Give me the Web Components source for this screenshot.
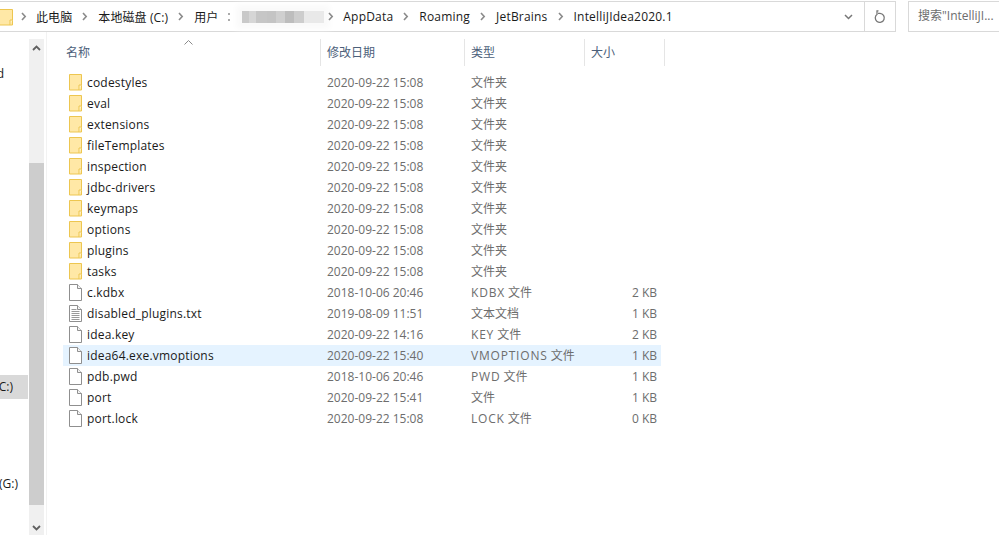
<!DOCTYPE html>
<html>
<head>
<meta charset="utf-8">
<title>IntelliJIdea2020.1</title>
<style>
  html, body { margin: 0; height: 100%; background: #fff; overflow: hidden; }
  body { font: 12px "Open Sans", "Noto Sans CJK SC", sans-serif; }
</style>
</head>
<body>
<explorer-window></explorer-window>

<template id="folder-icon">
  <svg width="13" height="17" viewBox="0 0 13 17"><path d="M.5.5h12v15.5H.5z" fill="#ffe8a6" stroke="#edc650"/><path d="M10 16v-5h2.5" fill="#fff3cf" stroke="#edc650"/></svg>
</template>
<template id="file-icon">
  <svg width="13" height="17" viewBox="0 0 13 17"><path d="M.5.5h8l4 4v12H.5z" fill="#fff" stroke="#8f8f8f"/><path d="M8.5.5v4h4" fill="#f3f3f3" stroke="#8f8f8f"/></svg>
</template>
<template id="text-icon">
  <svg width="13" height="17" viewBox="0 0 13 17"><path d="M.5.5h8l4 4v12H.5z" fill="#fff" stroke="#8f8f8f"/><path d="M8.5.5v4h4" fill="#f3f3f3" stroke="#8f8f8f"/><path d="M2.5 4.5h5M2.5 6.5h8M2.5 8.5h8M2.5 10.5h8M2.5 12.5h8M2.5 14.5h8" stroke="#9a9a9a"/></svg>
</template>

<script>
/* BARRA DE ENDERECO */
class AddressBar extends HTMLElement {
  constructor() {
    super();
    this.attachShadow({ mode: "open" });
    const chevron = `<svg class="sep" width="6" height="9" viewBox="0 0 6 9"><path d="M1 1l3.2 3.5L1 8" fill="none" stroke="#8a8a8a" stroke-width="1.6"/></svg>`;
    const crumbs = ["此电脑", "本地磁盘 (C:)", "用户"];
    const crumbs2 = ["AppData", "Roaming", "JetBrains", "IntelliJIdea2020.1"];
    this.shadowRoot.innerHTML = `
      <style>
        :host { display: flex; height: 32px; box-sizing: border-box; padding-top: 1px; color: #1a1a1a; }
        .bar { flex: 0 0 896px; box-sizing: border-box; height: 31px; border: 1px solid #d9d9d9; border-left: 0; display: flex; align-items: center; }
        .folder { flex: none; display: block; margin-top: 2px; }
        .sep { flex: none; margin: 0 10px; }
        .folder + .sep { margin: 0 9px 0 8px; }
        .crumb { white-space: nowrap; letter-spacing: .2px; }
        .crumb.cjk { letter-spacing: .1px; }
        .dots { width: 2px; height: 8px; flex: none; margin: 0 12px 0 10px; border-top: 2px solid #aaa; border-bottom: 2px solid #aaa; box-sizing: border-box; }
        .blur { width: 82px; height: 12px; flex: none; background: linear-gradient(90deg, #c9c9c9 0 8%, #d6d6d6 8% 17%, #c6c6c6 17% 30%, #c4c4c4 30% 42%, #cfcfcf 42% 52%, #bdbdbd 52% 64%, #cdcdcd 64% 76%, #e9e9e9 76% 100%); box-shadow: 0 0 6px 6px #fafafa; }
        .blur + .sep { margin: 0 9px 0 4px; }
        .spacer { flex: 1; }
        .drop { width: 31px; display: flex; justify-content: center; flex: none; }
        .refresh { width: 31px; height: 100%; border-left: 1px solid #d9d9d9; display: flex; justify-content: center; align-items: center; flex: none; box-sizing: border-box; }
        .search { margin-left: 12px; flex: 1; box-sizing: border-box; height: 31px; border: 1px solid #d9d9d9; border-right: 0; color: #6d6d6d; padding-left: 9px; line-height: 27px; white-space: nowrap; overflow: hidden; }
      </style>
      <div class="bar">
        <svg class="folder" width="13" height="17" viewBox="0 0 13 17"><path d="M-1 .5h13.5v15.5H-1z" fill="#ffe8a6" stroke="#edc650"/><path d="M10 16v-5h2.5" fill="#fff3cf" stroke="#edc650"/></svg>${chevron}
        ${crumbs.map(c => `<span class="crumb cjk">${c}</span>${c === "用户" ? "" : chevron}`).join("")}
        <span class="dots"></span><span class="blur"></span>${chevron}
        ${crumbs2.map((c, i) => `<span class="crumb">${c}</span>${i < 3 ? chevron : ""}`).join("")}
        <span class="spacer"></span>
        <span class="drop"><svg width="9" height="6" viewBox="0 0 9 6"><path d="M1 1l3.5 3.5L8 1" fill="none" stroke="#777" stroke-width="1.5"/></svg></span>
        <span class="refresh"><svg width="12" height="14" viewBox="0 0 12 14"><path d="M3.2 4.2A4.5 4.5 0 1 0 6 3.4H4M4.5 .8L3 .8V5" fill="none" stroke="#777" stroke-width="1.3"/></svg></span>
      </div>
      <div class="search">搜索"IntelliJI...</div>`;
  }
}
customElements.define("address-bar", AddressBar);

/* PAINEL DE NAVEGACAO */
class NavPane extends HTMLElement {
  constructor() {
    super();
    this.attachShadow({ mode: "open" });
    this.shadowRoot.innerHTML = `
      <style>
        :host { display: block; position: relative; flex: 0 0 29px; overflow: hidden; color: #1a1a1a; }
        /* so sobra a ponta direita do texto, o resto fica cortado */
        span { position: absolute; white-space: nowrap; line-height: 21px; }
        .sel { position: absolute; left: 0; right: 1px; top: 343px; height: 24px; background: #d9d9d9; }
      </style>
      <div class="sel"></div>
      <span style="top:31px;right:25px">d</span>
      <span style="top:344px;right:16px">C:)</span>
      <span style="top:441px;right:11px">(G:)</span>`;
  }
}
customElements.define("nav-pane", NavPane);

/* BARRA DE ROLAGEM */
class ScrollTrack extends HTMLElement {
  constructor() {
    super();
    this.attachShadow({ mode: "open" });
    this.shadowRoot.innerHTML = `
      <style>
        :host { display: flex; flex-direction: column; flex: 0 0 15px; margin-top: 7px; background: #f0f0f0; }
        .btn { height: 17px; display: flex; align-items: center; justify-content: center; flex: none; }
        .gap { height: 107px; flex: none; }
        .thumb { height: 342px; flex: none; background: #cdcdcd; }
        .rest { flex: 1; display: flex; align-items: flex-end; justify-content: center; padding-bottom: 4px; }
      </style>
      <div class="btn"><svg width="9" height="6" viewBox="0 0 9 6"><path d="M1 5l3.5-3.5L8 5" fill="none" stroke="#606060" stroke-width="1.8"/></svg></div>
      <div class="gap"></div>
      <div class="thumb"></div>
      <div class="rest"><svg width="9" height="6" viewBox="0 0 9 6"><path d="M1 1l3.5 3.5L8 1" fill="none" stroke="#606060" stroke-width="1.8"/></svg></div>`;
  }
}
customElements.define("scroll-track", ScrollTrack);

/* LINHA DE ARQUIVO */
class FileRow extends HTMLElement {
  constructor() {
    super();
    this.attachShadow({ mode: "open" });
  }
  connectedCallback() {
    const icon = document.getElementById((this.getAttribute("icon") || "file") + "-icon");
    const tipo = this.getAttribute("type").replace(/[A-Z]+/, m => `<span class="latin">${m}</span>`);
    this.shadowRoot.innerHTML = `
      <style>
        :host { display: grid; grid-template-columns: 264px 144px 114px 72px; width: 598px; height: 21px; line-height: 21px; white-space: nowrap; color: #6d6d6d; }
        :host([selected]) { background: #e5f3ff; }
        .name { display: flex; align-items: center; padding-left: 6px; color: #1a1a1a; letter-spacing: .2px; }
        .ico { width: 18px; height: 17px; flex: none; display: flex; }
        .latin { letter-spacing: .8px; }
        .size { text-align: right; }
      </style>
      <div class="name"><span class="ico"></span>${this.getAttribute("name")}</div>
      <div class="date">${this.getAttribute("date")}</div>
      <div class="type">${tipo}</div>
      <div class="size">${this.getAttribute("size") || ""}</div>`;
    this.shadowRoot.querySelector(".ico").appendChild(icon.content.cloneNode(true));
  }
}
customElements.define("file-row", FileRow);

/* LISTA DE ARQUIVOS */
const arquivos = [
  {name:"codestyles",date:"2020-09-22 15:08",type:"文件夹",icon:"folder"},
  {name:"eval",date:"2020-09-22 15:08",type:"文件夹",icon:"folder"},
  {name:"extensions",date:"2020-09-22 15:08",type:"文件夹",icon:"folder"},
  {name:"fileTemplates",date:"2020-09-22 15:08",type:"文件夹",icon:"folder"},
  {name:"inspection",date:"2020-09-22 15:08",type:"文件夹",icon:"folder"},
  {name:"jdbc-drivers",date:"2020-09-22 15:08",type:"文件夹",icon:"folder"},
  {name:"keymaps",date:"2020-09-22 15:08",type:"文件夹",icon:"folder"},
  {name:"options",date:"2020-09-22 15:08",type:"文件夹",icon:"folder"},
  {name:"plugins",date:"2020-09-22 15:08",type:"文件夹",icon:"folder"},
  {name:"tasks",date:"2020-09-22 15:08",type:"文件夹",icon:"folder"},
  {name:"c.kdbx",date:"2018-10-06 20:46",type:"KDBX 文件",size:"2 KB"},
  {name:"disabled_plugins.txt",date:"2019-08-09 11:51",type:"文本文档",size:"1 KB",icon:"text"},
  {name:"idea.key",date:"2020-09-22 14:16",type:"KEY 文件",size:"2 KB"},
  {name:"idea64.exe.vmoptions",date:"2020-09-22 15:40",type:"VMOPTIONS 文件",size:"1 KB",selected:true},
  {name:"pdb.pwd",date:"2018-10-06 20:46",type:"PWD 文件",size:"1 KB"},
  {name:"port",date:"2020-09-22 15:41",type:"文件",size:"1 KB"},
  {name:"port.lock",date:"2020-09-22 15:08",type:"LOCK 文件",size:"0 KB"}
];

class FileList extends HTMLElement {
  constructor() {
    super();
    this.attachShadow({ mode: "open" });
    this.shadowRoot.innerHTML = `
      <style>
        :host { display: block; flex: 1; margin-left: 2px; border-left: 1px solid #f2f2f2; padding: 7px 0 0 16px; position: relative; }
        .head { display: grid; grid-template-columns: 258px 144px 120px 80px; width: 602px; height: 27px; color: #4c607a; margin-bottom: 6px; }
        .head div { padding-left: 3px; line-height: 27px; border-right: 1px solid #e5e5e5; height: 27px; box-sizing: border-box; }
        .head div + div { padding-left: 6px; }
        .sort { position: absolute; left: 137px; top: 8px; }
      </style>
      <svg class="sort" width="9" height="5" viewBox="0 0 9 5"><path d="M.5 4.5l4-4 4 4" fill="none" stroke="#8a8a8a"/></svg>
      <div class="head"><div>名称</div><div>修改日期</div><div>类型</div><div>大小</div></div>
      <div class="rows"></div>`;
    const rows = this.shadowRoot.querySelector(".rows");
    arquivos.forEach(a => {
      const row = document.createElement("file-row");
      row.setAttribute("name", a.name);
      row.setAttribute("date", a.date);
      row.setAttribute("type", a.type);
      row.setAttribute("icon", a.icon || "file");
      if (a.size) row.setAttribute("size", a.size);
      if (a.selected) row.setAttribute("selected", "");
      rows.appendChild(row);
    });
  }
}
customElements.define("file-list", FileList);

/* JANELA */
class ExplorerWindow extends HTMLElement {
  constructor() {
    super();
    this.attachShadow({ mode: "open" });
    this.shadowRoot.innerHTML = `
      <style>
        :host { display: flex; flex-direction: column; width: 999px; height: 535px; overflow: hidden; }
        .main { display: flex; flex: 1; min-height: 0; }
      </style>
      <address-bar></address-bar>
      <div class="main">
        <nav-pane></nav-pane>
        <scroll-track></scroll-track>
        <file-list></file-list>
      </div>`;
  }
}
customElements.define("explorer-window", ExplorerWindow);
</script>
</body>
</html>
